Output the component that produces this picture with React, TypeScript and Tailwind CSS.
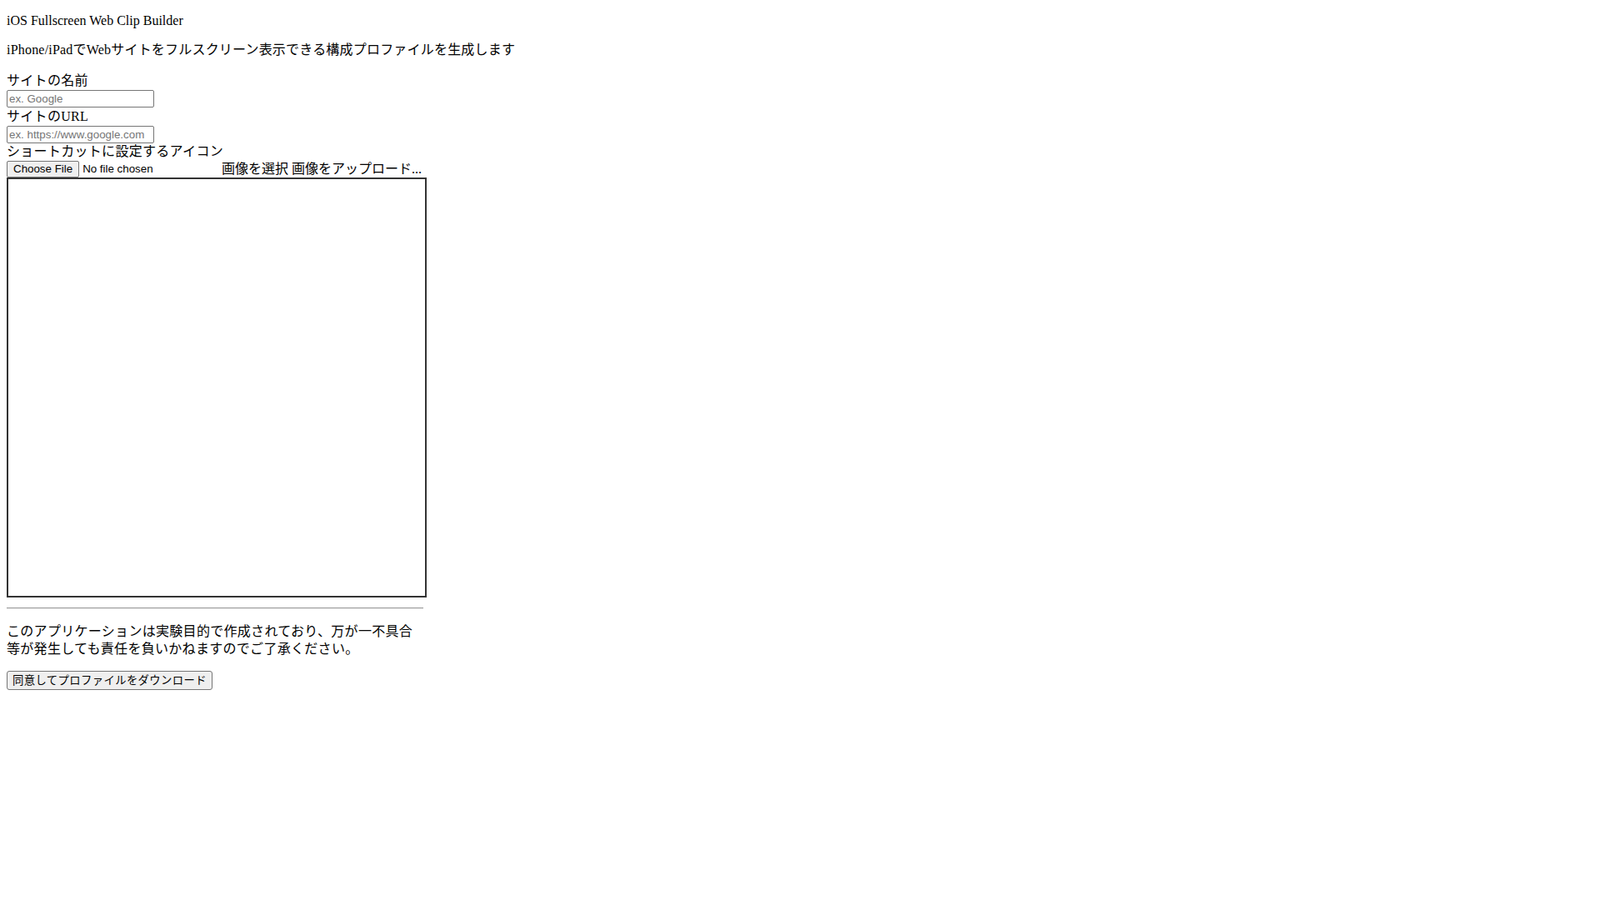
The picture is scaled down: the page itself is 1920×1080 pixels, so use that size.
export default function App() {
  const serif = "font-['Liberation_Serif','Noto_Sans_CJK_JP',serif]";
  const control = "font-['Liberation_Sans','Noto_Sans_CJK_JP',sans-serif] text-[13.33px]";

  return (
    <div className={`min-h-screen bg-white pl-2 pt-4 text-[16px] text-black ${serif}`}>
      <div className="w-[500px]">
        <p className="mb-4 leading-[18px]">iOS Fullscreen Web Clip Builder</p>
        <p className="mb-4 h-[20px] leading-[20px] tracking-[0.2px] whitespace-nowrap">
          iPhone/iPadでWebサイトをフルスクリーン表示できる構成プロファイルを生成します
        </p>

        <label className="block h-[22px] leading-[22px] tracking-[0.3px]">サイトの名前</label>
        <input
          type="text"
          placeholder="ex. Google"
          className={`block h-[21px] w-[177px] rounded-[2px] border border-[#767676] px-[2px] py-px leading-[17px] placeholder:text-[#757575] ${control}`}
        />
        <label className="block h-[22px] leading-[22px] tracking-[0.3px]">サイトのURL</label>
        <input
          type="text"
          placeholder="ex. https://www.google.com"
          className={`block h-[21px] w-[177px] rounded-[2px] border border-[#767676] px-[2px] py-px leading-[17px] placeholder:text-[#757575] ${control}`}
        />
        <label className="block h-[20px] leading-[20px] tracking-[0.3px]">ショートカットに設定するアイコン</label>

        <div className="flex h-[21px] items-center whitespace-nowrap">
          <div className={`flex w-[254px] items-center ${control}`}>
            <button
              type="button"
              className="mr-1 h-[20px] rounded-[2px] border border-[#767676] bg-[#efefef] px-[7px] leading-[16px]"
            >
              Choose File
            </button>
            <span>No file chosen</span>
          </div>
          <span className="ml-1 leading-[20px]">画像を選択 画像をアップロード...</span>
        </div>

        <canvas width={500} height={500} className="block h-[504px] w-[504px] border-2 border-[#333333]" />

        <hr className="mt-3 border-0 border-t border-b border-t-[#9a9a9a] border-b-[#eeeeee]" />

        <p className="mt-4 leading-[21px] tracking-[0.3px]">
          このアプリケーションは実験目的で作成されており、万が一不具合
          <br />
          等が発生しても責任を負いかねますのでご了承ください。
        </p>

        <button
          type="button"
          className={`mt-4 h-[23px] rounded-[3px] border border-[#767676] bg-[#efefef] px-[6px] leading-[19px] tracking-[0.4px] ${control}`}
        >
          同意してプロファイルをダウンロード
        </button>
      </div>
    </div>
  );
}
